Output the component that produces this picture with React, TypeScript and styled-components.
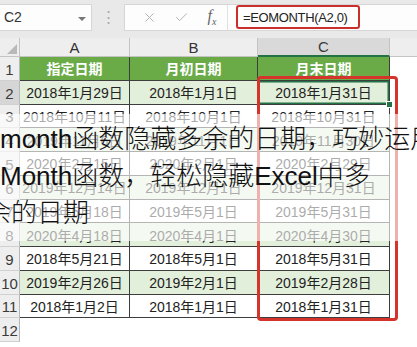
import React from 'react';
import styled, { createGlobalStyle } from 'styled-components';
import { X, Check } from 'lucide-react';

const GlobalStyle = createGlobalStyle`
    html, body {
        margin: 0;
        padding: 0;
        background: #ffffff;
    }
    body {
        font-family: 'Liberation Sans', 'Noto Sans CJK SC', sans-serif;
    }
`;

type RowKind = 'head' | 'even' | 'odd';

const data: string[][] = [
    ['2018年1月29日', '2018年1月1日', '2018年1月31日'],
    ['2018年10月11日', '2018年10月1日', '2018年10月31日'],
    ['2019年11月6日', '2019年11月1日', '2019年11月30日'],
    ['2020年2月15日', '2020年2月1日', '2020年2月29日'],
    ['2019年12月14日', '2019年12月1日', '2019年12月31日'],
    ['2019年5月18日', '2019年5月1日', '2019年5月31日'],
    ['2020年4月18日', '2020年4月1日', '2020年4月30日'],
    ['2018年5月21日', '2018年5月1日', '2018年5月31日'],
    ['2019年2月26日', '2019年2月1日', '2019年2月28日'],
    ['2018年1月2日', '2018年1月1日', '2018年1月31日'],
];

const columns = ['A', 'B', 'C'];
const headers = ['指定日期', '月初日期', '月末日期'];

const App = () => {
    return (
        <Screen>
            <GlobalStyle />
            <Toolbar>
                <NameBox>
                    C2
                    <Caret />
                </NameBox>
                <Dots>⋮</Dots>
                <FormulaArea>
                    <ToolIcon>
                        <X size={15} strokeWidth={1.6} />
                    </ToolIcon>
                    <ToolIcon>
                        <Check size={15} strokeWidth={1.6} />
                    </ToolIcon>
                    <Fx>
                        f<sub>x</sub>
                    </Fx>
                    <FormulaInput>
                        <Highlight>=EOMONTH(A2,0)</Highlight>
                    </FormulaInput>
                </FormulaArea>
            </Toolbar>
            <Band />
            <Sheet>
                <Corner>
                    <CornerMark />
                </Corner>
                {columns.map((c) => (
                    <ColHead key={c} $active={c === 'C'}>
                        {c}
                    </ColHead>
                ))}
                <ColHead $blank />

                <RowHead>1</RowHead>
                {headers.map((h) => (
                    <Cell key={h} $kind="head">
                        {h}
                    </Cell>
                ))}
                <Blank />

                {data.map((row, i) => {
                    const n = i + 2;
                    const kind: RowKind = n % 2 === 0 ? 'even' : 'odd';
                    return (
                        <React.Fragment key={n}>
                            <RowHead $active={n === 2}>{n}</RowHead>
                            {row.map((v, j) => (
                                <Cell key={j} $kind={kind} $selected={n === 2 && j === 2}>
                                    {v}
                                    {n === 2 && j === 2 && <Handle />}
                                </Cell>
                            ))}
                            <Blank />
                        </React.Fragment>
                    );
                })}

                <RowHead>12</RowHead>
                <Blank />
                <Blank />
                <Blank />
                <Blank />
            </Sheet>

            <RedFrame />

            <Caption>
                <CaptionLine>month函数隐藏多余的日期，巧妙运用EO</CaptionLine>
                <CaptionLine>Month函数，轻松隐藏Excel中多</CaptionLine>
                <CaptionLine $shift={-15}>余的日期</CaptionLine>
            </Caption>
        </Screen>
    );
};

const Screen = styled.div`
    position: relative;
    width: 417px;
    height: 347px;
    overflow: hidden;
    background: #ffffff;
`;

const Toolbar = styled.div`
    display: flex;
    align-items: center;
    height: 33px;
    padding-top: 1px;
    box-sizing: border-box;
    background: #e9e9e9;
`;

const NameBox = styled.div`
    position: relative;
    display: flex;
    align-items: center;
    width: 92px;
    height: 27px;
    box-sizing: border-box;
    padding-left: 4px;
    background: #fdfdfd;
    border: 1px solid #d6d6d6;
    border-left: none;
    font-size: 14px;
    color: #333;
`;

const Caret = styled.span`
    position: absolute;
    right: 5px;
    top: 12px;
    width: 0;
    height: 0;
    border-left: 4px solid transparent;
    border-right: 4px solid transparent;
    border-top: 4px solid #777;
`;

const Dots = styled.div`
    width: 32px;
    text-align: center;
    font-size: 15px;
    color: #a8a8a8;
`;

const FormulaArea = styled.div`
    flex: 1;
    display: flex;
    align-items: center;
    height: 27px;
    background: #fdfdfd;
    border: 1px solid #d6d6d6;
    border-right: none;
    box-sizing: border-box;
    padding-left: 8px;
`;

const ToolIcon = styled.span`
    display: flex;
    align-items: center;
    justify-content: center;
    width: 32px;
    color: #b4b4b4;
`;

const Fx = styled.span`
    width: 30px;
    text-align: center;
    font-family: 'Liberation Serif', serif;
    font-style: italic;
    font-size: 16px;
    color: #666;
    sub {
        font-size: 10px;
    }
`;

const FormulaInput = styled.div`
    flex: 1;
    display: flex;
    align-items: center;
    align-self: stretch;
    border-left: 1px solid #e2e2e2;
    padding-left: 8px;
`;

const Highlight = styled.span`
    display: flex;
    align-items: center;
    height: 24px;
    box-sizing: border-box;
    padding: 0 10px 0 5px;
    border: 2.5px solid #c9302c;
    border-radius: 3px;
    font-size: 13px;
    letter-spacing: -0.35px;
    color: #222;
`;

const Band = styled.div`
    height: 5px;
    background: #e9e9e9;
`;

const Sheet = styled.div`
    display: grid;
    grid-template-columns: 20px 110px 128px 132px 1fr;
    grid-template-rows: 19px;
    grid-auto-rows: 23.75px;
`;

const Corner = styled.div`
    display: flex;
    align-items: flex-end;
    justify-content: flex-end;
    padding: 0 2px 2px 0;
    background: #eeeeee;
    border-right: 1px solid #c4c4c4;
    border-bottom: 1px solid #c4c4c4;
`;

const CornerMark = styled.div`
    width: 0;
    height: 0;
    border-left: 10px solid transparent;
    border-bottom: 10px solid #b9b9b9;
`;

const ColHead = styled.div<{ $active?: boolean; $blank?: boolean }>`
    display: flex;
    align-items: center;
    justify-content: center;
    font-size: 15px;
    color: ${(p) => (p.$active ? '#3b3b3b' : '#333')};
    background: ${(p) => (p.$active ? '#d9d9d9' : '#eeeeee')};
    border-right: ${(p) => (p.$blank ? 'none' : '1px solid #c4c4c4')};
    border-bottom: ${(p) => (p.$active ? '2px solid #217346' : '1px solid #c4c4c4')};
`;

const RowHead = styled.div<{ $active?: boolean }>`
    display: flex;
    align-items: flex-end;
    justify-content: center;
    padding-bottom: 2px;
    box-sizing: border-box;
    font-size: 15px;
    color: #3a3a3a;
    background: ${(p) => (p.$active ? '#d6d6d6' : '#eeeeee')};
    border-right: 1px solid #b8b8b8;
    border-bottom: 1px solid #d0d0d0;
`;

const Cell = styled.div<{ $kind: RowKind; $selected?: boolean }>`
    position: relative;
    display: flex;
    align-items: center;
    justify-content: center;
    box-sizing: border-box;
    font-size: 14px;
    font-weight: ${(p) => (p.$kind === 'head' ? 'bold' : 'normal')};
    color: ${(p) => (p.$kind === 'head' ? '#ffffff' : '#222')};
    background: ${(p) => (p.$kind === 'head' ? '#6aab48' : p.$kind === 'even' ? '#e2efda' : '#ffffff')};
    border-right: 1px solid #3d3d3d;
    border-bottom: 1px solid #3d3d3d;
    box-shadow: ${(p) => (p.$selected ? 'inset 0 0 0 1.5px #217346' : 'none')};
`;

const Handle = styled.span`
    position: absolute;
    right: -4px;
    bottom: -4px;
    width: 5px;
    height: 5px;
    background: #217346;
    border: 1px solid #ffffff;
    z-index: 1;
`;

const Blank = styled.div`
    background: #ffffff;
`;

const RedFrame = styled.div`
    position: absolute;
    left: 257px;
    top: 76px;
    width: 141px;
    height: 245px;
    box-sizing: border-box;
    border: 3px solid #d5342c;
    border-radius: 4px;
    pointer-events: none;
`;

const Caption = styled.div`
    position: absolute;
    left: 0;
    right: 0;
    top: 114px;
    height: 127px;
    box-sizing: border-box;
    padding-top: 7px;
    background: rgba(255, 255, 255, 0.62);
    overflow: hidden;
    font-family: 'Liberation Sans', 'Noto Sans CJK SC', sans-serif;
    font-weight: 300;
    font-size: 26px;
    line-height: 37px;
    color: #111;
`;

const CaptionLine = styled.div<{ $shift?: number }>`
    white-space: nowrap;
    margin-left: ${(p) => p.$shift || 0}px;
`;

export default App;
